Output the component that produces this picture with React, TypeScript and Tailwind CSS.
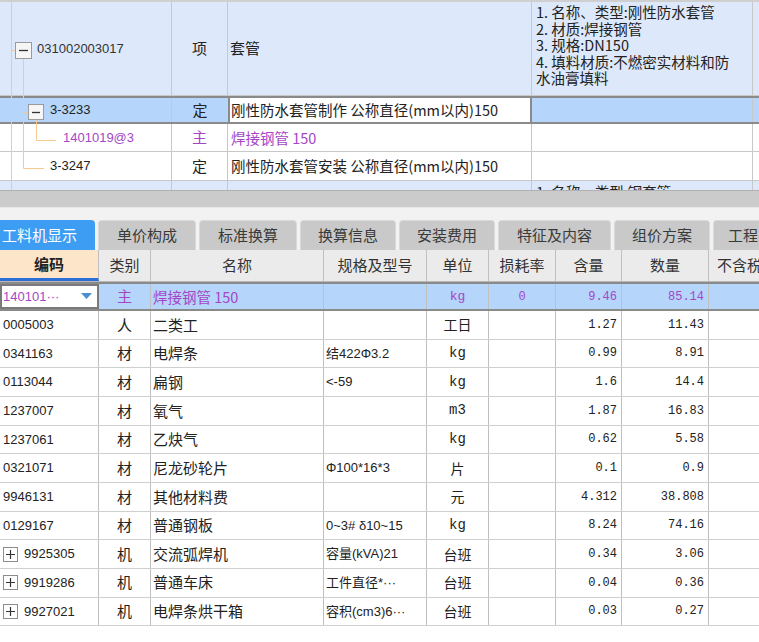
import React from "react";

const CJK = { fontFamily: '"Noto Sans CJK SC", "Noto Sans", sans-serif' };
const SANS = { fontFamily: '"Liberation Sans", "Noto Sans CJK SC", sans-serif' };
const MONO = { fontFamily: '"Liberation Mono", "Noto Sans CJK SC", monospace' };

const rows = [
  { code: "0005003", kind: "人", name: "二类工", spec: "", unit: "工日", rate: "", qty: "1.27", num: "11.43" },
  { code: "0341163", kind: "材", name: "电焊条", spec: "结422Φ3.2", unit: "kg", rate: "", qty: "0.99", num: "8.91" },
  { code: "0113044", kind: "材", name: "扁钢", spec: "<-59", unit: "kg", rate: "", qty: "1.6", num: "14.4" },
  { code: "1237007", kind: "材", name: "氧气", spec: "", unit: "m3", rate: "", qty: "1.87", num: "16.83" },
  { code: "1237061", kind: "材", name: "乙炔气", spec: "", unit: "kg", rate: "", qty: "0.62", num: "5.58" },
  { code: "0321071", kind: "材", name: "尼龙砂轮片", spec: "Φ100*16*3", unit: "片", rate: "", qty: "0.1", num: "0.9" },
  { code: "9946131", kind: "材", name: "其他材料费", spec: "", unit: "元", rate: "", qty: "4.312", num: "38.808" },
  { code: "0129167", kind: "材", name: "普通钢板", spec: "0~3# δ10~15", unit: "kg", rate: "", qty: "8.24", num: "74.16" },
  { code: "9925305", kind: "机", name: "交流弧焊机", spec: "容量(kVA)21", unit: "台班", rate: "", qty: "0.34", num: "3.06", plus: true },
  { code: "9919286", kind: "机", name: "普通车床", spec: "工件直径*···", unit: "台班", rate: "", qty: "0.04", num: "0.36", plus: true },
  { code: "9927021", kind: "机", name: "电焊条烘干箱", spec: "容积(cm3)6···", unit: "台班", rate: "", qty: "0.03", num: "0.27", plus: true },
];

const tabs = ["单价构成", "标准换算", "换算信息", "安装费用", "特征及内容", "组价方案", "工程"];
const tabW = ["w-[98px]", "w-[98px]", "w-[96px]", "w-[96px]", "w-[113px]", "w-[96px]", "w-[60px]"];

function PlusBox() {
  return (
    <span className="inline-flex items-center justify-center w-[15px] h-[15px] border border-[#8c8c8c] bg-white mr-[6px] shrink-0">
      <svg width="11" height="11" viewBox="0 0 11 11">
        <path d="M1 5.5h9M5.5 1v9" stroke="#333" strokeWidth="1.2" />
      </svg>
    </span>
  );
}

function TreeLines() {
  const c = "#f8c98e";
  return (
    <svg className="absolute left-0 top-0 pointer-events-none" width="172" height="190">
      <path d="M11.5 0V190" stroke={c} />
      <path d="M11 48.5H15" stroke={c} />
      <path d="M23.5 57V166.5H44" stroke={c} fill="none" />
      <path d="M23 110.5H28" stroke={c} />
      <path d="M36.5 118V138.5H56" stroke={c} fill="none" />
      <rect x="15.5" y="40.5" width="16" height="16" fill="#f6f6f6" stroke="#9a9a9a" />
      <path d="M19 48.5H28" stroke="#333" strokeWidth="1.3" />
      <rect x="28.5" y="102.5" width="15" height="15" fill="#f6f6f6" stroke="#9a9a9a" />
      <path d="M32 110.5H40" stroke="#333" strokeWidth="1.3" />
    </svg>
  );
}

function TopTree() {
  return (
    <div className="relative h-[190px] overflow-hidden border-t-2 border-[#cfcfcf]">
      {/* row 1 */}
      <div className="flex h-[94px] bg-[#dde9fb] border-b border-[#c8c8c8]">
        <div className="w-[172px] border-r border-[#c8c8c8] flex items-center pl-[37px] text-[13px] text-[#333]" style={SANS}>
          031002003017
        </div>
        <div className="w-[56px] border-r border-[#c8c8c8] flex items-center justify-center text-[15px] text-[#222]" style={CJK}>
          项
        </div>
        <div className="w-[304px] border-r border-[#c8c8c8] flex items-center pl-[2px] text-[15px] text-[#222]" style={CJK}>
          套管
        </div>
        <div className="w-[221px] border-r border-[#c8c8c8] pl-[4px] pr-[13px] pt-[2px] text-[14.5px] leading-[16.5px] text-[#222]" style={CJK}>
          1. 名称、类型:刚性防水套管
          <br />
          2. 材质:焊接钢管
          <br />
          3. 规格:DN150
          <br />
          4. 填料材质:不燃密实材料和防水油膏填料
        </div>
        <div className="flex-1" />
      </div>
      {/* row 2 selected */}
      <div className="flex h-[28px] bg-[#b5d5fb] border-y-2 border-[#8a8a8a]">
        <div className="w-[172px] border-r border-[#c8c8c8] flex items-center pl-[50px] text-[13px] text-[#222]" style={SANS}>
          3-3233
        </div>
        <div className="w-[56px] flex items-center justify-center text-[15px] text-[#222]" style={CJK}>
          定
        </div>
        <div className="w-[304px] bg-white border-x-2 border-[#8a8a8a] flex items-center pl-[1px] text-[14.5px] text-[#222] whitespace-nowrap" style={CJK}>
          刚性防水套管制作 公称直径(mm以内)150
        </div>
        <div className="w-[221px] border-r border-[#c8c8c8]" />
        <div className="flex-1" />
      </div>
      {/* row 3 */}
      <div className="flex h-[28px] bg-white border-b border-[#c8c8c8]">
        <div className="w-[172px] border-r border-[#c8c8c8] flex items-center pl-[63px] text-[13px] text-[#a347c7]" style={SANS}>
          1401019@3
        </div>
        <div className="w-[56px] border-r border-[#c8c8c8] flex items-center justify-center text-[15px] text-[#a347c7]" style={CJK}>
          主
        </div>
        <div className="w-[304px] border-r border-[#c8c8c8] flex items-center pl-[3px] text-[14.5px] text-[#a347c7]" style={CJK}>
          焊接钢管 150
        </div>
        <div className="w-[221px] border-r border-[#c8c8c8]" />
        <div className="flex-1" />
      </div>
      {/* row 4 */}
      <div className="flex h-[29px] bg-white border-b border-[#c8c8c8]">
        <div className="w-[172px] border-r border-[#c8c8c8] flex items-center pl-[50px] text-[13px] text-[#222]" style={SANS}>
          3-3247
        </div>
        <div className="w-[56px] border-r border-[#c8c8c8] flex items-center justify-center text-[15px] text-[#222]" style={CJK}>
          定
        </div>
        <div className="w-[304px] border-r border-[#c8c8c8] flex items-center pl-[3px] text-[14.5px] text-[#222] whitespace-nowrap" style={CJK}>
          刚性防水套管安装 公称直径(mm以内)150
        </div>
        <div className="w-[221px] border-r border-[#c8c8c8]" />
        <div className="flex-1" />
      </div>
      {/* row 5 (cut by the splitter) */}
      <div className="flex h-[40px] bg-[#dde9fb]">
        <div className="w-[172px] border-r border-[#c8c8c8]" />
        <div className="w-[56px] border-r border-[#c8c8c8]" />
        <div className="w-[304px] border-r border-[#c8c8c8]" />
        <div className="w-[221px] border-r border-[#c8c8c8] pl-[4px] pt-[3px] text-[14.5px] leading-[16.5px] text-[#222]" style={CJK}>
          1. 名称、类型:钢套管
        </div>
        <div className="flex-1" />
      </div>
      <TreeLines />
    </div>
  );
}

function Splitter() {
  return (
    <div>
      <div className="h-[17px] bg-[#cbcbcb] border-t border-[#b0b0b0]" />
      <div className="h-[1px] bg-[#e6e6e6]" />
      <div className="h-[10px] bg-[#f2f2f2]" />
    </div>
  );
}

function Tabs() {
  return (
    <div className="flex h-[32px] bg-[#f2f2f2] pt-[2px] gap-[3px] overflow-hidden" style={CJK}>
      <div className="w-[95px] shrink-0 bg-[#3d9df3] rounded-tr-[4px] text-white text-[15px] flex items-center pl-[2px]">
        工料机显示
      </div>
      {tabs.map((t, i) => (
        <div
          key={t}
          className={`${tabW[i]} shrink-0 bg-[#c9c9c9] rounded-t-[4px] border-x border-t border-[#dadada] text-[#3a3a3a] text-[15px] flex items-center justify-center whitespace-nowrap`}
        >
          {i === 6 ? <span className="self-center pl-[14px] w-full">{t}</span> : t}
        </div>
      ))}
    </div>
  );
}

const COLS = ["w-[99px]", "w-[52px]", "w-[173px]", "w-[103px]", "w-[62px]", "w-[67px]", "w-[66px]", "w-[87px]"];

function Header() {
  const names = ["类别", "名称", "规格及型号", "单位", "损耗率", "含量", "数量"];
  return (
    <div className="flex h-[32px] bg-[#ebebeb] border-b border-[#b8b8b8] text-[15px] text-[#333]" style={CJK}>
      <div className={`${COLS[0]} shrink-0 bg-[#fde5c9] border-r border-[#c0c0c0] border-b-[3px] border-b-[#2a6fd6] flex items-center justify-center font-bold text-[#222]`}>
        编码
      </div>
      {names.map((n, i) => (
        <div key={n} className={`${COLS[i + 1]} shrink-0 border-r border-[#c0c0c0] flex items-center justify-center whitespace-nowrap`}>
          {n}
        </div>
      ))}
      <div className="flex-1 flex items-center pl-[8px] whitespace-nowrap overflow-hidden">不含税</div>
    </div>
  );
}

function SelectedRow() {
  const p = "text-[#a347c7]";
  return (
    <div className="flex h-[29px] bg-[#b5d5fb] border-y-2 border-[#8a8a8a]">
      <div className={`${COLS[0]} shrink-0 bg-white border-2 border-[#7a7a7a] flex items-center pl-[1px] pr-[5px] text-[13px] ${p}`} style={SANS}>
        <span className="flex-1">140101···</span>
        <svg width="11" height="7" viewBox="0 0 11 7">
          <path d="M0 0H11L5.5 6Z" fill="#4a8fd0" />
        </svg>
      </div>
      <div className={`${COLS[1]} shrink-0 border-r border-[#c0c0c0] flex items-center justify-center text-[15px] ${p}`} style={CJK}>
        主
      </div>
      <div className={`${COLS[2]} shrink-0 border-r border-[#c0c0c0] flex items-center pl-[2px] text-[14.5px] ${p}`} style={CJK}>
        焊接钢管 150
      </div>
      <div className={`${COLS[3]} shrink-0 border-r border-[#c0c0c0]`} />
      <div className={`${COLS[4]} shrink-0 border-r border-[#c0c0c0] flex items-center justify-center text-[13px] ${p}`} style={MONO}>
        kg
      </div>
      <div className={`${COLS[5]} shrink-0 border-r border-[#c0c0c0] flex items-center justify-center text-[12px] ${p}`} style={MONO}>
        0
      </div>
      <div className={`${COLS[6]} shrink-0 border-r border-[#c0c0c0] flex items-center justify-end pr-[4px] text-[12px] ${p}`} style={MONO}>
        9.46
      </div>
      <div className={`${COLS[7]} shrink-0 border-r border-[#c0c0c0] flex items-center justify-end pr-[4px] text-[12px] ${p}`} style={MONO}>
        85.14
      </div>
      <div className="flex-1" />
    </div>
  );
}

function DataRow({ r }: { r: (typeof rows)[number] }) {
  return (
    <div className="flex h-[28.67px] bg-white border-b border-[#cfcfcf] text-[#222]">
      <div className={`${COLS[0]} shrink-0 border-r border-[#c0c0c0] flex items-center pl-[3px] text-[13px]`} style={SANS}>
        {r.plus && <PlusBox />}
        {r.code}
      </div>
      <div className={`${COLS[1]} shrink-0 border-r border-[#c0c0c0] flex items-center justify-center text-[15px]`} style={CJK}>
        {r.kind}
      </div>
      <div className={`${COLS[2]} shrink-0 border-r border-[#c0c0c0] flex items-center pl-[2px] text-[15px]`} style={CJK}>
        {r.name}
      </div>
      <div className={`${COLS[3]} shrink-0 border-r border-[#c0c0c0] flex items-center pl-[2px] text-[13px] whitespace-nowrap overflow-hidden`} style={SANS}>
        {r.spec}
      </div>
      <div className={`${COLS[4]} shrink-0 border-r border-[#c0c0c0] flex items-center justify-center text-[14px]`} style={/[a-z]/.test(r.unit) ? MONO : CJK}>
        {r.unit}
      </div>
      <div className={`${COLS[5]} shrink-0 border-r border-[#c0c0c0]`} />
      <div className={`${COLS[6]} shrink-0 border-r border-[#c0c0c0] flex items-center justify-end pr-[4px] text-[12px]`} style={MONO}>
        {r.qty}
      </div>
      <div className={`${COLS[7]} shrink-0 border-r border-[#c0c0c0] flex items-center justify-end pr-[4px] text-[12px]`} style={MONO}>
        {r.num}
      </div>
      <div className="flex-1" />
    </div>
  );
}

export default function App() {
  return (
    <div className="w-[759px] h-[642px] bg-white overflow-hidden">
      <TopTree />
      <Splitter />
      <Tabs />
      <Header />
      <SelectedRow />
      {rows.map((r) => (
        <DataRow key={r.code} r={r} />
      ))}
    </div>
  );
}
